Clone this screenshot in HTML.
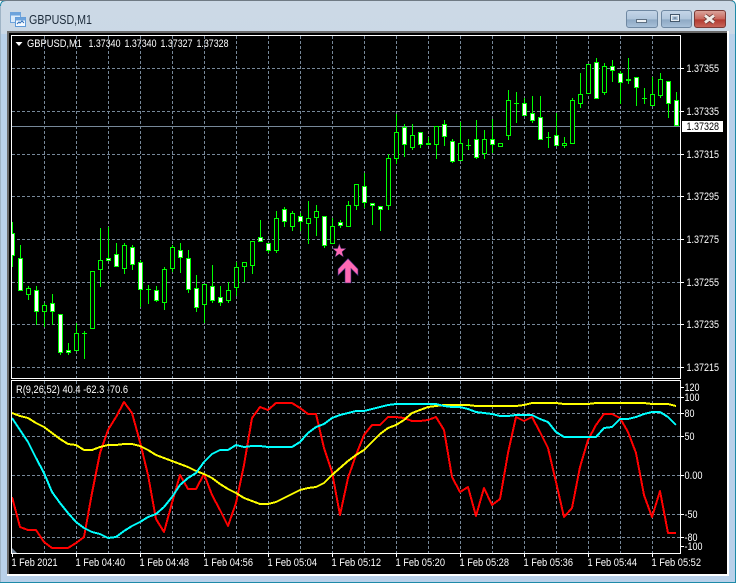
<!DOCTYPE html>
<html><head><meta charset="utf-8"><title>GBPUSD,M1</title>
<style>
html,body{margin:0;padding:0;background:#fff;width:738px;height:584px;overflow:hidden}
svg{display:block;font-family:"Liberation Sans",sans-serif}
.g{stroke:#778899;stroke-width:1;stroke-dasharray:3 2;fill:none}
.c{font-size:11px;fill:#fff}
.l{fill:none;stroke-width:2;stroke-linejoin:round;shape-rendering:crispEdges}
</style></head><body>
<svg width="738" height="584" viewBox="0 0 738 584" xmlns="http://www.w3.org/2000/svg">
<defs>
<linearGradient id="tb" x1="0" y1="0" x2="0" y2="1"><stop offset="0" stop-color="#ccd9e6"/><stop offset="1" stop-color="#b9d1ea"/></linearGradient>
<linearGradient id="bt" x1="0" y1="0" x2="0" y2="1"><stop offset="0" stop-color="#c5d6e8"/><stop offset=".5" stop-color="#b0c6dc"/><stop offset=".55" stop-color="#8ea9c4"/><stop offset="1" stop-color="#a9c1da"/></linearGradient>
<linearGradient id="cl" x1="0" y1="0" x2="0" y2="1"><stop offset="0" stop-color="#dba79f"/><stop offset=".5" stop-color="#c9675c"/><stop offset=".55" stop-color="#b23a30"/><stop offset="1" stop-color="#c9675c"/></linearGradient>
</defs>
<!-- window frame -->
<path d="M.5 583V6Q.5 .5 6 .5H730Q735.5 .5 735.5 6V582.5H.5Z" fill="url(#tb)" stroke="#1e8aa8"/>
<path d="M0 .5H733" stroke="#6f7a84" fill="none"/>
<path d="M.5 6V582" stroke="#9fb4c6" fill="none"/>
<rect x="1" y="34" width="734" height="548" fill="#b9d1ea"/>
<!-- inner border -->
<rect x="7" y="31" width="722" height="545" fill="#fff"/>
<rect x="7" y="31" width="720" height="543" fill="#696969"/>
<rect x="9" y="33" width="718" height="541" fill="#000"/>
<!-- title icon -->
<rect x="10.5" y="12.5" width="10" height="10" fill="#dcebfa" stroke="#6da3dc"/>
<rect x="10.5" y="12.5" width="10" height="3" fill="#6da3dc"/>
<rect x="15.5" y="17.5" width="10" height="9" fill="#f4f9ff" stroke="#5f9ad8"/>
<rect x="15.5" y="17.5" width="10" height="3" fill="#6da3dc"/>
<path d="M17 24l2-2 1 1 2-2 2 2" fill="none" stroke="#2f6fb8"/>
<text x="29" y="24" font-size="12.500px" fill="#1c2b3a" textLength="63" lengthAdjust="spacingAndGlyphs">GBPUSD,M1</text>
<!-- buttons -->
<rect x="626.5" y="10.5" width="31" height="17" rx="2.5" fill="url(#bt)" stroke="#6f88a2"/>
<rect x="636.5" y="19.5" width="10" height="3" fill="#eef2f6" stroke="#5d6f82"/>
<rect x="661.5" y="10.5" width="30" height="17" rx="2.5" fill="url(#bt)" stroke="#6f88a2"/>
<rect x="670.5" y="14.5" width="9" height="7" fill="none" stroke="#44586c" stroke-width="1"/>
<rect x="671.5" y="15.5" width="7" height="5" fill="none" stroke="#e8eef4"/>
<rect x="673.5" y="17.5" width="3" height="1" fill="#44586c"/>
<rect x="694.5" y="10.5" width="31" height="17" rx="2.5" fill="url(#cl)" stroke="#7a3a36"/>
<path d="M705 15.5l9 7M714 15.5l-9 7" stroke="#6a3a38" stroke-width="4.4" fill="none"/>
<path d="M705 15.5l9 7M714 15.5l-9 7" stroke="#f2ece8" stroke-width="2.8" fill="none"/>
<!-- grid main -->
<path class="g" d="M12 68.500H680M12 111.500H680M12 154.500H680M12 196.500H680M12 239.500H680M12 282.500H680M12 324.500H680M12 367.500H680"/>
<path class="g" d="M44.500 36V378M76.500 36V378M108.500 36V378M140.500 36V378M172.500 36V378M204.500 36V378M236.500 36V378M268.500 36V378M300.500 36V378M332.500 36V378M364.500 36V378M396.500 36V378M428.500 36V378M460.500 36V378M492.500 36V378M524.500 36V378M556.500 36V378M588.500 36V378M620.500 36V378M652.500 36V378"/>
<path d="M12 126.500H680" stroke="#778899" fill="none"/>
<!-- wicks -->
<path fill="none" stroke="#00ff00" d="M12.500 222V267M20.500 245V291M28.500 286V300M36.500 286V325M44.500 303V327M52.500 294V325M60.500 314V355M68.500 343V355M76.500 323V351M84.500 331V359M82 333.500h5M100.500 228V287M108.500 227V259M116.500 243V267M124.500 243V274M132.500 245V270M140.500 260V307M148.500 285V304M146 289.500h5M156.500 286V302M164.500 267V310M172.500 245V272M180.500 243V273M188.500 250V293M196.500 275V312M204.500 284V323M212.500 265V303M220.500 286V306M228.500 282V303M236.500 262V296M244.500 262V282M252.500 241V274M260.500 220V242M268.500 243V253M276.500 211V253M284.500 207V227M292.500 211V231M300.500 213V231M308.500 201V244M316.500 205V236M324.500 216V248M332.500 218V244M340.500 220V228M348.500 201V227M356.500 184V210M364.500 173V208M372.500 203V225M380.500 206V231M388.500 154V210M396.500 114V164M404.500 124V157M412.500 124V150M420.500 132V148M428.500 137V145M436.500 126V159M444.500 120V146M452.500 139V163M460.500 122V161M468.500 139V150M466 145.500h5M476.500 120V159M484.500 130V159M492.500 119V153M508.500 90V140M516.500 92V123M514 103.500h5M524.500 98V116M532.500 96V123M540.500 96V140M548.500 132V148M546 137.500h5M556.500 113V146M564.500 137V148M572.500 98V144M580.500 73V108M596.500 58V99M604.500 63V95M612.500 60V82M620.500 71V104M628.500 58V84M636.500 77V106M644.500 88V104M642 98.500h5M652.500 77V106M660.500 73V98M668.500 81V118M676.500 92V126"/>
<!-- white bodies -->
<g fill="#fff" stroke="#00ff00">
<path d="M11.500 233.500h3v22h-3zM18.500 258.500h4v32h-4zM34.500 290.500h4v21h-4zM50.500 303.500h4v8h-4zM58.500 314.500h4v38h-4zM66.500 350.500h4v2h-4zM106.500 258.500h4v2h-4zM114.500 254.500h4v12h-4zM130.500 247.500h4v17h-4zM138.500 262.500h4v27h-4zM154.500 290.500h4v10h-4zM178.500 250.500h4v7h-4zM186.500 258.500h4v31h-4zM194.500 288.500h4v19h-4zM210.500 286.500h4v14h-4zM218.500 297.500h4v5h-4zM258.500 237.500h4v4h-4zM266.500 243.500h4v7h-4zM282.500 209.500h4v12h-4zM298.500 216.500h4v5h-4zM322.500 216.500h4v29h-4zM338.500 222.500h4v3h-4zM362.500 186.500h4v16h-4zM370.500 203.500h4v2h-4zM378.500 206.500h4v3h-4zM402.500 127.500h4v17h-4zM418.500 132.500h4v12h-4zM442.500 124.500h4v12h-4zM450.500 141.500h4v20h-4zM474.500 139.500h4v18h-4zM490.500 139.500h4v5h-4zM522.500 103.500h4v12h-4zM530.500 113.500h4v7h-4zM538.500 117.500h4v22h-4zM554.500 135.500h4v10h-4zM594.500 62.500h4v36h-4zM610.500 66.500h4v4h-4zM618.500 73.500h4v9h-4zM634.500 77.500h4v10h-4zM666.500 81.500h4v22h-4zM674.500 100.500h4v25h-4z"/>
</g>
<!-- hollow bodies -->
<g fill="#000" stroke="#00ff00">
<path d="M26.500 288.500h4v6h-4zM42.500 305.500h4v6h-4zM74.500 333.500h4v17h-4zM90.500 271.500h4v57h-4zM98.500 260.500h4v9h-4zM122.500 245.500h4v23h-4zM162.500 269.500h4v33h-4zM170.500 247.500h4v21h-4zM202.500 284.500h4v20h-4zM226.500 290.500h4v10h-4zM234.500 267.500h4v20h-4zM242.500 262.500h4v4h-4zM250.500 241.500h4v24h-4zM274.500 218.500h4v32h-4zM290.500 213.500h4v13h-4zM306.500 218.500h4v5h-4zM314.500 211.500h4v6h-4zM330.500 226.500h4v17h-4zM346.500 205.500h4v21h-4zM354.500 184.500h4v21h-4zM386.500 158.500h4v47h-4zM394.500 132.500h4v26h-4zM410.500 135.500h4v12h-4zM426.500 143.500h4v1h-4zM434.500 126.500h4v18h-4zM458.500 143.500h4v17h-4zM482.500 139.500h4v14h-4zM498.500 143.500h4v3h-4zM506.500 100.500h4v35h-4zM562.500 143.500h4v2h-4zM570.500 100.500h4v43h-4zM578.500 94.500h4v9h-4zM586.500 64.500h4v29h-4zM602.500 66.500h4v26h-4zM626.500 79.500h4v1h-4zM650.500 94.500h4v11h-4zM658.500 79.500h4v16h-4z"/>
</g>
<!-- arrows -->
<polygon points="339.300,243.800 341,248.500 346,248.500 342,251.800 343.500,257 339.300,254 335,257 336.600,251.800 332.600,248.500 337.600,248.500" fill="#ff69b4" stroke="#3a2a6a" stroke-width=".5"/>
<path d="M348 258.500L358 269V275.500L351 268.500V283H345V268.500L338 275.500V269Z" fill="#ff69b4" stroke="#3a2a7a" stroke-width=".6"/>
<!-- chart borders -->
<rect x="11.500" y="35.500" width="669" height="343" fill="none" stroke="#fff"/>
<!-- grid sub -->
<path class="g" d="M12 397.500H680M12 413.500H680M12 436.500H680M12 475.500H680M12 514.500H680M12 537.500H680"/>
<path class="g" d="M44.500 381V553M76.500 381V553M108.500 381V553M140.500 381V553M172.500 381V553M204.500 381V553M236.500 381V553M268.500 381V553M300.500 381V553M332.500 381V553M364.500 381V553M396.500 381V553M428.500 381V553M460.500 381V553M492.500 381V553M524.500 381V553M556.500 381V553M588.500 381V553M620.500 381V553M652.500 381V553"/>
<!-- indicator lines -->
<polyline class="l" stroke="#ff0000" points="12,497 20,527 28,530 36,530 44,542 52,548 60,548 68,548 76,543 84,537 92,493 100,453 108,430 116,417 124,402 132,413 140,442 148,475 156,519 164,532 172,503 180,475 188,489 196,489 204,474 212,495 220,510 228,526 236,503 244,465 252,418 260,407 268,410 276,403 284,403 292,403 300,408 308,414 316,414 324,448 332,472 340,515 348,478 356,455 364,435 372,425 380,425 388,417 396,417 404,418 412,421 420,421 428,420 436,417 444,430 452,477 460,492 468,487 476,516 484,488 492,505 500,499 508,453 516,417 524,421 532,417 540,432 548,448 556,482 564,517 572,508 580,467 588,440 596,425 604,414 612,414 620,418 628,432 636,453 644,495 652,517 660,491 668,533 676,533"/>
<polyline class="l" stroke="#ffff00" points="12,413 20,416 28,418 36,423 44,427 52,433 60,439 68,444 76,445 84,450 92,450 100,447 108,445 116,445 124,444 132,444 140,446 148,450 156,455 164,458 172,461 180,464 188,467 196,471 204,474 212,478 220,484 228,489 236,493 244,498 252,501 260,504 268,504 276,502 284,498 292,494 300,490 308,488 316,487 324,483 332,475 340,468 348,461 356,455 364,450 372,442 380,434 388,428 396,425 404,420 412,413 420,410 428,407 436,406 444,405 452,405 460,405 468,405 476,406 484,406 492,406 500,406 508,406 516,406 524,405 532,403 540,403 548,403 556,403 564,404 572,404 580,404 588,404 596,403 604,403 612,403 620,403 628,403 636,403 644,403 652,404 660,404 668,404 676,406"/>
<polyline class="l" stroke="#00ffff" points="12,418 20,430 28,442 36,458 44,473 52,492 60,503 68,513 76,522 84,528 92,532 100,534 108,538 116,537 124,531 132,526 140,522 148,517 156,514 164,507 172,497 180,485 188,478 196,473 204,462 212,454 220,450 228,450 236,445 244,447 252,446 260,446 268,447 276,447 284,447 292,447 300,442 308,433 316,427 324,424 332,418 340,415 348,413 356,411 364,411 372,409 380,407 388,405 396,404 404,404 412,404 420,404 428,404 436,404 444,406 452,407 460,407 468,409 476,412 484,413 492,414 500,416 508,416 516,415 524,415 532,415 540,419 548,422 556,432 564,437 572,437 580,437 588,437 596,437 604,428 612,427 620,419 628,419 636,417 644,414 652,412 660,412 668,417 676,425"/>
<!-- corner triangle -->
<polygon points="12,553 12,548 17,553" fill="#778899"/>
<rect x="11.500" y="380.500" width="669" height="173" fill="none" stroke="#fff"/>
<!-- right ticks -->
<path stroke="#fff" fill="none" d="M681 68.500h3M681 111.500h3M681 154.500h3M681 196.500h3M681 239.500h3M681 282.500h3M681 324.500h3M681 367.500h3M681 387.500h3M681 397.500h3M681 413.500h3M681 436.500h3M681 475.500h3M681 514.500h3M681 537.500h3M681 546.500h3"/>
<!-- bottom ticks -->
<path stroke="#fff" fill="none" d="M12.500 554v3M76.500 554v3M140.500 554v3M204.500 554v3M268.500 554v3M332.500 554v3M396.500 554v3M460.500 554v3M524.500 554v3M588.500 554v3M652.500 554v3"/>
<!-- header -->
<polygon points="15.500,42 22.500,42 19,46" fill="#fff"/>
<text class="c" x="27" y="47" textLength="55" lengthAdjust="spacingAndGlyphs">GBPUSD,M1</text>
<text class="c" x="88.500" y="47" textLength="32" lengthAdjust="spacingAndGlyphs">1.37340</text>
<text class="c" x="124.500" y="47" textLength="32" lengthAdjust="spacingAndGlyphs">1.37340</text>
<text class="c" x="160.500" y="47" textLength="32" lengthAdjust="spacingAndGlyphs">1.37327</text>
<text class="c" x="196.500" y="47" textLength="32" lengthAdjust="spacingAndGlyphs">1.37328</text>
<text class="c" x="16" y="393" textLength="112" lengthAdjust="spacingAndGlyphs">R(9,26,52) 40.4 -62.3 -70.6</text>
<!-- price labels -->
<text class="c" x="686.500" y="72" textLength="32.500" lengthAdjust="spacingAndGlyphs">1.37355</text>
<text class="c" x="686.500" y="115" textLength="32.500" lengthAdjust="spacingAndGlyphs">1.37335</text>
<text class="c" x="686.500" y="158" textLength="32.500" lengthAdjust="spacingAndGlyphs">1.37315</text>
<text class="c" x="686.500" y="200" textLength="32.500" lengthAdjust="spacingAndGlyphs">1.37295</text>
<text class="c" x="686.500" y="243" textLength="32.500" lengthAdjust="spacingAndGlyphs">1.37275</text>
<text class="c" x="686.500" y="286" textLength="32.500" lengthAdjust="spacingAndGlyphs">1.37255</text>
<text class="c" x="686.500" y="328" textLength="32.500" lengthAdjust="spacingAndGlyphs">1.37235</text>
<text class="c" x="686.500" y="371" textLength="32.500" lengthAdjust="spacingAndGlyphs">1.37215</text>
<rect x="682" y="121" width="41" height="11" fill="#fff"/>
<text x="686.500" y="130" font-size="11px" fill="#000" textLength="32.500" lengthAdjust="spacingAndGlyphs">1.37328</text>
<!-- sub labels -->
<text class="c" x="684.500" y="391" textLength="15" lengthAdjust="spacingAndGlyphs">120</text>
<text class="c" x="684.500" y="401" textLength="15" lengthAdjust="spacingAndGlyphs">100</text>
<text class="c" x="684.500" y="417" textLength="10" lengthAdjust="spacingAndGlyphs">80</text>
<text class="c" x="684.500" y="440" textLength="10" lengthAdjust="spacingAndGlyphs">50</text>
<text class="c" x="684.500" y="479" textLength="18" lengthAdjust="spacingAndGlyphs">0.00</text>
<text class="c" x="684.500" y="518" textLength="13" lengthAdjust="spacingAndGlyphs">-50</text>
<text class="c" x="684.500" y="541" textLength="13" lengthAdjust="spacingAndGlyphs">-80</text>
<text class="c" x="684.500" y="550" textLength="18" lengthAdjust="spacingAndGlyphs">-100</text>
<!-- time labels -->
<text class="c" x="11.500" y="566" textLength="46" lengthAdjust="spacingAndGlyphs">1 Feb 2021</text>
<text class="c" x="75.500" y="566" textLength="49.500" lengthAdjust="spacingAndGlyphs">1 Feb 04:40</text>
<text class="c" x="139.500" y="566" textLength="49.500" lengthAdjust="spacingAndGlyphs">1 Feb 04:48</text>
<text class="c" x="203.500" y="566" textLength="49.500" lengthAdjust="spacingAndGlyphs">1 Feb 04:56</text>
<text class="c" x="267.500" y="566" textLength="49.500" lengthAdjust="spacingAndGlyphs">1 Feb 05:04</text>
<text class="c" x="331.500" y="566" textLength="49.500" lengthAdjust="spacingAndGlyphs">1 Feb 05:12</text>
<text class="c" x="395.500" y="566" textLength="49.500" lengthAdjust="spacingAndGlyphs">1 Feb 05:20</text>
<text class="c" x="459.500" y="566" textLength="49.500" lengthAdjust="spacingAndGlyphs">1 Feb 05:28</text>
<text class="c" x="523.500" y="566" textLength="49.500" lengthAdjust="spacingAndGlyphs">1 Feb 05:36</text>
<text class="c" x="587.500" y="566" textLength="49.500" lengthAdjust="spacingAndGlyphs">1 Feb 05:44</text>
<text class="c" x="651.500" y="566" textLength="49.500" lengthAdjust="spacingAndGlyphs">1 Feb 05:52</text>
</svg>
</body></html>
